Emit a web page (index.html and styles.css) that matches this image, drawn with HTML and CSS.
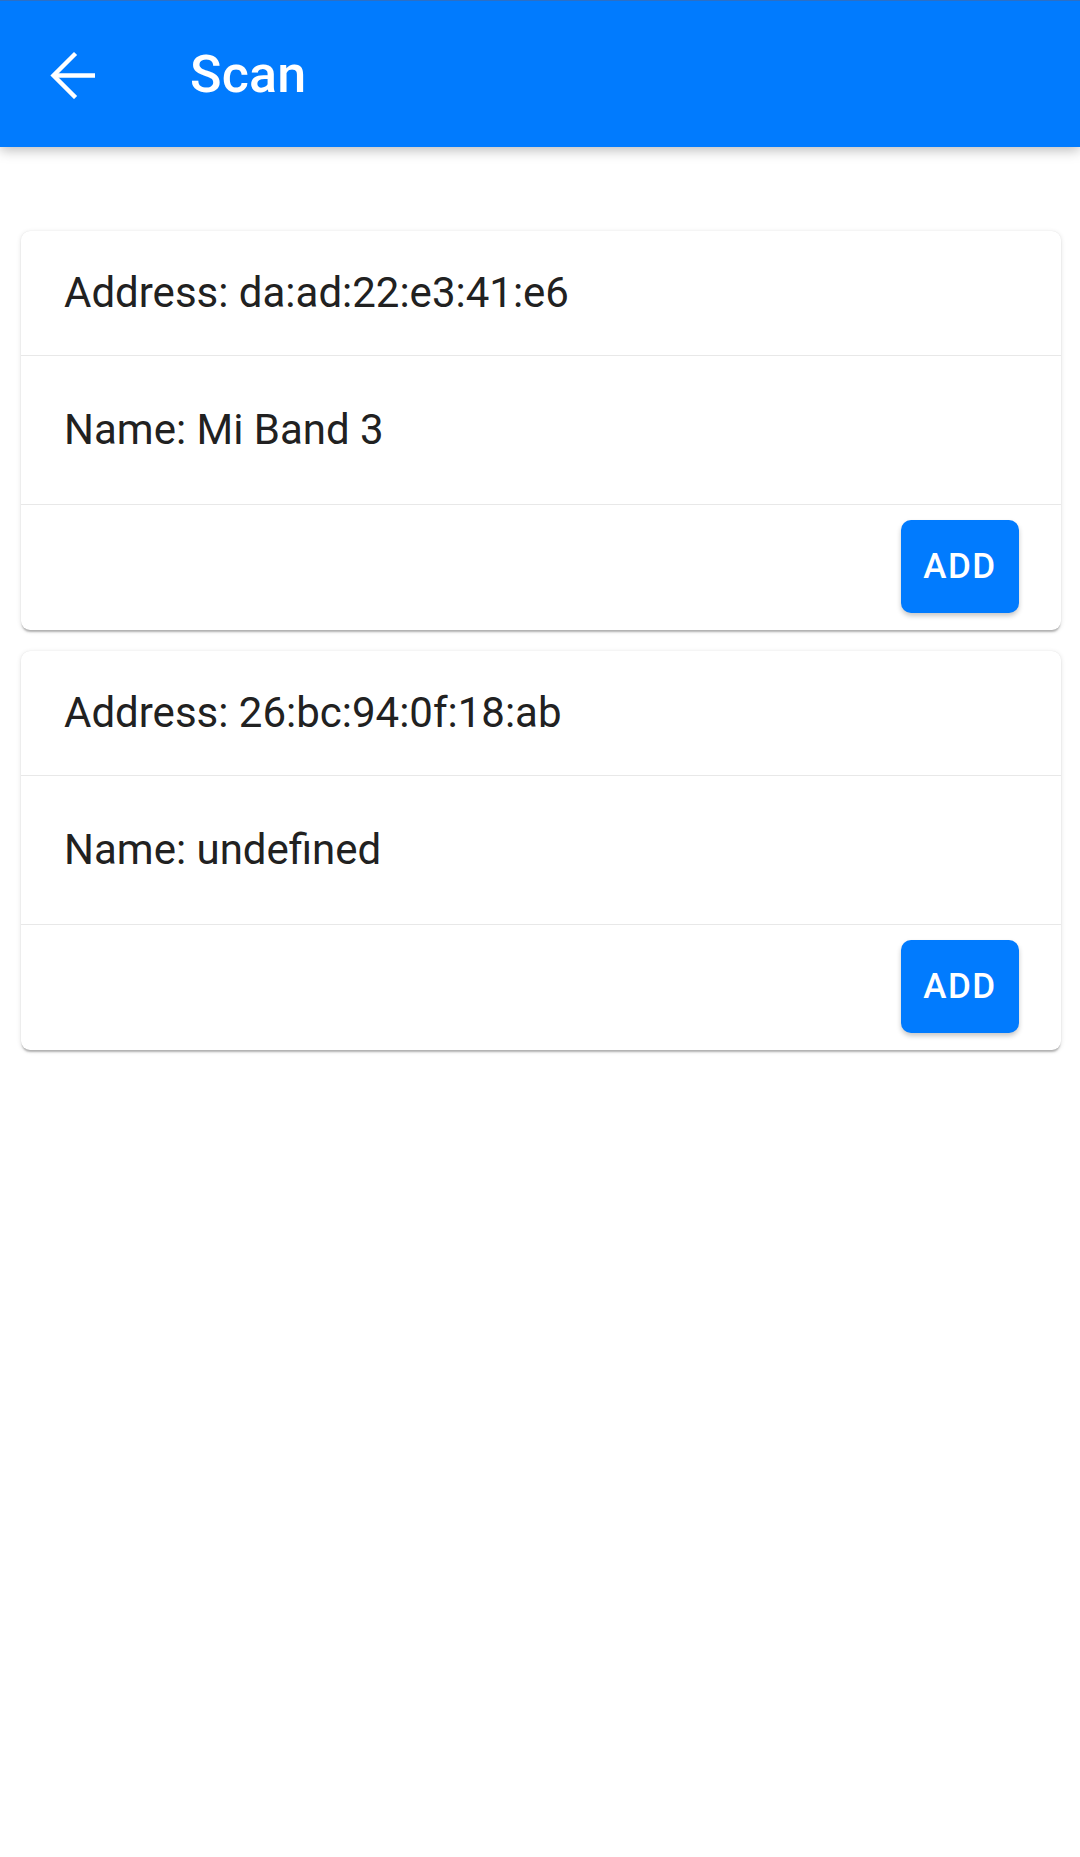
FILE: index.html
```html
<!DOCTYPE html>
<html>
<head>
<meta charset="utf-8">
<link rel="stylesheet" href="styles.css">
</head>
<body>
<header class="toolbar">
  <button class="back" aria-label="Back">
    <svg width="48" height="48" viewBox="0 0 48 48">
      <polyline points="25,4 4.5,24.5 25,45" fill="none" stroke="#fff" stroke-width="4.4" stroke-linecap="square" stroke-linejoin="miter"/>
      <line x1="5" y1="24.5" x2="46" y2="24.5" stroke="#fff" stroke-width="4.4"/>
    </svg>
  </button>
  <h1 class="title">Scan</h1>
</header>
<main class="content">
  <section class="card">
    <div class="item">Address: da:ad:22:e3:41:e6</div>
    <div class="item item-name">Name: Mi Band 3</div>
    <div class="actions"><button class="add">ADD</button></div>
  </section>
  <section class="card">
    <div class="item">Address: 26:bc:94:0f:18:ab</div>
    <div class="item item-name">Name: undefined</div>
    <div class="actions"><button class="add">ADD</button></div>
  </section>
</main>
</body>
</html>
```
FILE: styles.css
```css
* { box-sizing: border-box; }
html, body { margin: 0; padding: 0; background: #fff; }
body {
  width: 1080px;
  height: 1857px;
  overflow: hidden;
  font-family: Roboto, "Noto Sans", sans-serif;
  color: #212121;
}
.toolbar {
  height: 147px;
  background: #017bfe;
  border-top: 1px solid #2d6fc4;
  display: flex;
  align-items: center;
  box-shadow: 0 3px 12px rgba(0,0,0,0.28);
  position: relative;
  z-index: 2;
}
.back {
  margin-left: 49px;
  width: 48px;
  height: 48px;
  padding: 0;
  border: 0;
  background: none;
  display: flex;
  margin-top: 2px;
}
.title {
  margin: 0 0 0 93px;
  font-size: 52px;
  font-weight: 500;
  color: #fff;
  letter-spacing: 0.2px;
  line-height: 1;
  padding-top: 2px;
}
.content {
  padding: 84px 19px 0 21px;
  display: flex;
  flex-direction: column;
  gap: 21px;
}
.card {
  background: #fff;
  border-radius: 9px;
  box-shadow: 0 3px 2px -1px rgba(0,0,0,0.25), 0 1px 5px rgba(0,0,0,0.12), 0 0 1px rgba(0,0,0,0.10);
  display: flex;
  flex-direction: column;
  overflow: hidden;
}
.item {
  height: 125px;
  display: flex;
  align-items: center;
  padding-left: 43px;
  font-size: 42px;
  border-bottom: 1.5px solid #e8e8e8;
  padding-bottom: 2px;
}
.item-name {
  height: 149px;
}
.actions {
  height: 125px;
  display: flex;
  justify-content: flex-end;
  align-items: flex-start;
  padding: 15px 42px 0 0;
}
.add {
  width: 118px;
  height: 93px;
  border: 0;
  border-radius: 10px;
  background: #017bfe;
  color: #fff;
  font-family: Roboto, "Noto Sans", sans-serif;
  font-size: 35px;
  font-weight: 500;
  letter-spacing: 1.5px;
  padding: 0;
  box-shadow: 0 3px 5px rgba(0,0,0,0.22);
}
```
